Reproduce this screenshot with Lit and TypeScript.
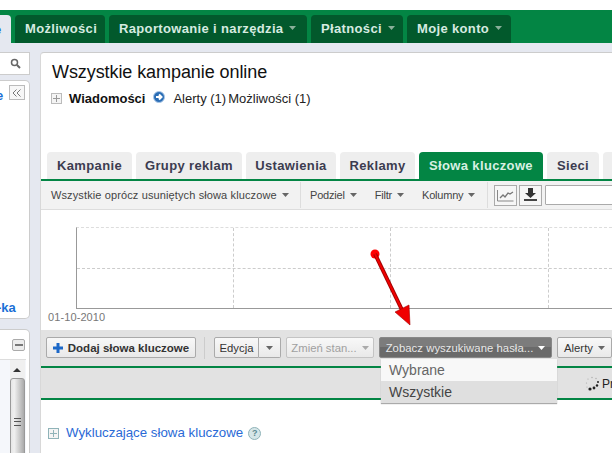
import { LitElement, html, css } from "lit";
import { customElement } from "lit/decorators.js";

const caret = (c = "#666") => html`<svg class="caret" width="7" height="4" viewBox="0 0 7 4"><path d="M0 0h7L3.500 4z" fill=${c}></path></svg>`;

@customElement("app-root")
export class AppRoot extends LitElement {
  static styles = css`
    :host { display: block; width: 612px; height: 453px; overflow: hidden; position: relative; background: #fff; font-family: "Liberation Sans", Arial, sans-serif; }
    .caret { flex: none; }
    .top { height: 10px; background: #fff; }
    .nav { height: 33px; background: #038544; display: flex; align-items: flex-end; gap: 4px; box-sizing: border-box; }
    .tab0 { width: 11px; height: 28px; background: #e5e8f0; border-top-right-radius: 4px; flex: none; overflow: hidden; color: #1a6fd6; font-weight: bold; font-size: 13px; line-height: 30px; text-indent: -6px; }
    .ntab { height: 28px; background: #02592c; border-radius: 4px 4px 0 0; color: #d6ebe0; font-weight: bold; font-size: 13px; letter-spacing: .35px; display: flex; align-items: center; gap: 6px; padding: 0 10px 2px; box-sizing: border-box; flex: none; white-space: nowrap; }
    .nav .t1 { width: 90px; }
    .nav .t2 { width: 198px; }
    .nav .t3 { width: 92px; }
    .nav .t4 { width: 104px; }
    .body { height: 410px; background: #e5e8f0; display: flex; padding-top: 9px; box-sizing: border-box; position: relative; gap: 11px; }
    .side { width: 30px; flex: none; display: flex; flex-direction: column; }
    .sbox { background: #fff; border: 1px solid #ccc; border-left: 0; box-sizing: border-box; flex: none; }
    .search { height: 23px; display: flex; justify-content: flex-end; align-items: center; padding-right: 8px; }
    .tree { height: 239px; margin-top: 5px; border-radius: 0 5px 5px 0; position: relative; color: #1a6fd6; font-weight: bold; font-size: 13px; }
    .tree .e { position: absolute; left: -4px; top: 8px; line-height: 14px; }
    .tree .ka { position: absolute; left: -3px; bottom: 3px; line-height: 14px; }
    .mini { position: absolute; left: 9px; top: 4px; width: 16px; height: 15px; border: 1px solid #bbb; box-sizing: border-box; display: flex; align-items: center; justify-content: center; background: #f7f7f7; }
    .tree2 { height: 130px; margin-top: 10px; border-radius: 0 5px 0 0; position: relative; }
    .minus { position: absolute; left: 12px; top: 9px; width: 13px; height: 12px; border: 1px solid #aaa; border-radius: 2px; background: #ececec; box-sizing: border-box; display: flex; align-items: center; justify-content: center; }
    .minus i { width: 8px; height: 2px; background: #777; }
    .list { position: absolute; left: 0; right: 3px; top: 29px; bottom: 0; background: #f5f7fb; border-top: 1px solid #ddd; }
    .sb { position: absolute; left: 10px; width: 15px; top: 0; bottom: 0; background: #f0f0f0; }
    .sb .up { position: absolute; left: 3px; top: 8px; }
    .thumb { position: absolute; left: 0; right: 0; top: 18px; bottom: -20px; background: linear-gradient(90deg, #e6e6e6, #f0f0f0 25%, #aaa); border: 1px solid #999; border-radius: 3px; box-sizing: border-box; }
    .grip { position: absolute; left: 3px; top: 39px; width: 7px; height: 8px; border-top: 1px solid #555; border-bottom: 1px solid #555; box-sizing: border-box; }
    .grip::after { content: ""; position: absolute; left: 0; right: 0; top: 2px; border-top: 1px solid #555; }
    .main { flex: 1; background: #fff; border-radius: 4px 0 0 0; border-top: 1px solid #ccc; border-left: 1px solid #d8d8d8; margin-left: -1px; position: relative; overflow: hidden; }
    .head { padding: 9px 0 0 11px; height: 99px; box-sizing: border-box; }
    h1 { margin: 0; font-size: 18px; font-weight: normal; color: #111; line-height: 20px; letter-spacing: -.08px; }
    .msgs { display: flex; align-items: center; font-size: 13px; margin: 8px 0 0 -1px; height: 16px; color: #222; white-space: nowrap; }
    .plus { width: 11px; height: 11px; border: 1px solid #bbb; background: #f4f4f4; box-sizing: border-box; display: flex; align-items: center; justify-content: center; flex: none; }
    .msgs b { margin-left: 7px; color: #111; }
    .msgs svg.go { margin: 0 8px 2px 8px; flex: none; }
    .msgs .mo { margin-left: 2px; }
    .tabs { display: flex; gap: 4px; padding-left: 6px; height: 27px; align-items: flex-end; }
    .tb { height: 27px; background: #eee; border-radius: 4px 4px 0 0; font-weight: bold; font-size: 13px; color: #3c3c50; display: flex; align-items: center; justify-content: center; box-sizing: border-box; flex: none; letter-spacing: .35px; white-space: nowrap; }
    .tb.on { background: #038544; color: #d9f0e2; }
    .bar { height: 28px; background: #f2f2f2; border-top: 2px solid #038544; border-bottom: 1px solid #ddd; display: flex; align-items: center; font-size: 11px; color: #444; padding-left: 10px; }
    .bar span { display: inline-flex; align-items: center; gap: 5px; white-space: nowrap; flex: none; }
    .bar .all { width: 238px; letter-spacing: .12px; }
    .bar .opt { letter-spacing: -.2px; }
    .sep { width: 1px; height: 26px; background: #ddd; flex: none; }
    .ml-11 { margin-left: 11px; }
    .ml-9 { margin-left: 9px; }
    .ml-18 { margin-left: 18px; }
    .sep2 { margin: 0 6px 0 12px; }
    .ib { width: 23px; height: 21px; border: 1px solid #aaa; background: #f6f6f6; box-sizing: border-box; display: flex; align-items: center; justify-content: center; flex: none; }
    .ib2 { margin-left: 2px; }
    .inp { width: 100px; height: 20px; background: #fff; border: 1px solid #aaa; box-sizing: border-box; flex: none; border-radius: 1px; margin-left: 3px; }
    .chart { height: 120px; position: relative; }
    .plot { position: absolute; left: 35px; top: 17px; right: 0; height: 82px; box-sizing: border-box; border-left: 1px solid #999; border-bottom: 1px solid #999; border-top: 1px dashed #ddd; }
    .v { position: absolute; top: 0; bottom: 0; border-left: 1px dashed #ccc; }
    .h { position: absolute; left: 0; right: 0; top: 40px; border-top: 1px dashed #ccc; }
    .date { position: absolute; left: 7px; top: 101px; font-size: 11px; color: #777; letter-spacing: .1px; }
    .tools { background: #e2e2e2; display: flex; align-items: flex-start; padding: 7px 0 0 5px; box-sizing: content-box; height: 29px; border-bottom: 2px solid #038544; }
    .btn { height: 21px; border: 1px solid #aaa; border-radius: 2px; background: linear-gradient(#f8f8f8, #e9e9e9); box-sizing: border-box; display: inline-flex; align-items: center; justify-content: center; font-size: 11.3px; color: #333; gap: 5px; flex: none; white-space: nowrap; }
    .btn.add { font-weight: bold; font-size: 11.5px; width: 150px; }
    .tools .sep { height: 22px; background: #ccc; margin: 0 9px 0 8px; }
    .btn.ed { width: 45px; border-radius: 2px 0 0 2px; }
    .btn.edc { width: 22px; border-left: 0; border-radius: 0 2px 2px 0; }
    .btn.dis { width: 88px; margin-left: 5px; color: #a0a0a0; border-color: #c4c4c4; }
    .btn.sel { width: 173px; margin-left: 5px; background: linear-gradient(#7c7c7c 0 45%, #6a6a6a 45%); border-color: #888; color: #e8e8e8; letter-spacing: .05px; }
    .btn.al { width: 55px; margin-left: 5px; }
    .gray { height: 30px; background: #e2e2e2; border-bottom: 2px solid #038544; position: relative; }
    .pr { position: absolute; left: 544px; top: 8px; display: flex; align-items: center; gap: 2px; font-size: 12px; color: #222; }
    .neg { display: flex; align-items: center; margin: 26px 0 0 7px; font-size: 13.3px; line-height: 14px; color: #2a6ad6; white-space: nowrap; }
    .plus.np { margin-right: 7px; border-color: #8fb3b8; }
    .q { width: 13px; height: 13px; border-radius: 50%; background: #d6e6e8; border: 1px solid #8fb3b8; box-sizing: border-box; font-size: 9px; font-weight: bold; color: #5c8a90; display: flex; align-items: center; justify-content: center; margin-left: 5px; flex: none; }
    .menu { position: absolute; left: 381px; top: 359px; width: 176px; background: #f8f8f8; box-shadow: 0 1px 1px #aaa; font-size: 14px; color: #666; }
    .menu div { height: 22px; line-height: 22px; padding-left: 8px; }
    .menu .hi { background: #dfdfdf; color: #444; }
    .arrow { position: absolute; left: 0; top: 0; pointer-events: none; }
  `;

  render() {
    return html`
      <div class="top"></div>
      <div class="nav">
        <div class="tab0">e</div>
        <div class="ntab t1">Możliwości</div>
        <div class="ntab t2">Raportowanie i narzędzia ${caret("#8ab09a")}</div>
        <div class="ntab t3">Płatności ${caret("#8ab09a")}</div>
        <div class="ntab t4">Moje konto ${caret("#8ab09a")}</div>
      </div>
      <div class="body">
        <div class="side">
          <div class="sbox search">
            <svg width="11" height="11" viewBox="0 0 11 11"><circle cx="4.500" cy="4.500" r="3" fill="none" stroke="#666" stroke-width="1.5"></circle><path d="M7 7l3 3" stroke="#666" stroke-width="2"></path></svg>
          </div>
          <div class="sbox tree">
            <span class="e">e</span>
            <div class="mini"><svg width="10" height="8" viewBox="0 0 10 8"><path d="M4.500 0.500L1 4l3.500 3.500M8.500 0.500L5 4l3.500 3.500" fill="none" stroke="#777"></path></svg></div>
            <span class="ka">-ka</span>
          </div>
          <div class="sbox tree2">
            <div class="minus"><i></i></div>
            <div class="list">
              <div class="sb">
                <svg class="up" width="8" height="4" viewBox="0 0 8 4"><path d="M4 0l4 4H0z" fill="#333"></path></svg>
                <div class="thumb"><div class="grip"></div></div>
              </div>
            </div>
          </div>
        </div>
        <div class="main">
          <div class="head">
            <h1>Wszystkie kampanie online</h1>
            <div class="msgs">
              <div class="plus"><svg width="7" height="7" viewBox="0 0 7 7"><path d="M0 3.500h7M3.500 0v7" stroke="#999"></path></svg></div>
              <b>Wiadomości</b>
              <svg class="go" width="12" height="12" viewBox="0 0 12 12"><circle cx="6" cy="6" r="5.500" fill="#2a6db5" stroke="#a9c6e6"></circle><path d="M3 6h5M6 3.500L8.500 6 6 8.500" stroke="#fff" stroke-width="2" fill="none"></path></svg>
              <span>Alerty (1)</span><span class="mo">Możliwości (1)</span>
            </div>
          </div>
          <div class="tabs">
            <div class="tb" style="width:85px">Kampanie</div>
            <div class="tb" style="width:106px">Grupy reklam</div>
            <div class="tb" style="width:90px">Ustawienia</div>
            <div class="tb" style="width:75px">Reklamy</div>
            <div class="tb on" style="width:124px">Słowa kluczowe</div>
            <div class="tb" style="width:52px">Sieci</div>
            <div class="tb" style="width:30px"></div>
          </div>
          <div class="bar">
            <span class="all">Wszystkie oprócz usuniętych słowa kluczowe ${caret()}</span>
            <div class="sep ml-11"></div>
            <span class="opt ml-9">Podziel ${caret()}</span>
            <span class="opt ml-18">Filtr ${caret()}</span>
            <span class="opt ml-18">Kolumny ${caret()}</span>
            <div class="sep sep2"></div>
            <div class="ib"><svg width="17" height="13" viewBox="0 0 17 13"><path d="M.5 1v11h16" fill="none" stroke="#888"></path><path d="M3 9l3-3 2 2 3-4 2 1 3-2" fill="none" stroke="#777" stroke-width="1.300"></path></svg></div>
            <div class="ib ib2"><svg width="15" height="14" viewBox="0 0 15 14"><path d="M5 0h5v5h3L7.500 10 2 5h3z" fill="#333"></path><path d="M1 11h13v2H1z" fill="#444"></path></svg></div>
            <div class="inp"></div>
          </div>
          <div class="chart">
            <div class="plot">
              <div class="v" style="left:156px"></div>
              <div class="v" style="left:313px"></div>
              <div class="v" style="left:471px"></div>
              <div class="h"></div>
            </div>
            <div class="date">01-10-2010</div>
          </div>
          <div class="tools">
            <div class="btn add"><svg width="10" height="10" viewBox="0 0 10 10"><path d="M3.500 0h3v3.500H10v3H6.500V10h-3V6.500H0v-3h3.500z" fill="#1c68c8"></path></svg>Dodaj słowa kluczowe</div>
            <div class="sep"></div>
            <div class="btn ed">Edycja</div>
            <div class="btn edc">${caret()}</div>
            <div class="btn dis">Zmień stan... ${caret("#aaa")}</div>
            <div class="btn sel">Zobacz wyszukiwane hasła... ${caret("#fff")}</div>
            <div class="btn al">Alerty ${caret()}</div>
          </div>
          <div class="gray">
            <div class="pr">
              <svg width="15" height="15" viewBox="0 0 15 15"><g fill="#222"><circle cx="5" cy="13" r="1.600"></circle><circle cx="9" cy="12" r="1.400"></circle><circle cx="12" cy="9.500" r="1.200"></circle><circle cx="13" cy="6" r="1"></circle></g><g fill="#aaa"><circle cx="11" cy="2.500" r=".7"></circle><circle cx="7" cy="1.500" r=".7"></circle><circle cx="3" cy="3" r=".6"></circle><circle cx="1.500" cy="7" r=".6"></circle><circle cx="2" cy="11" r=".6"></circle></g></svg>
              <span>Pr</span>
            </div>
          </div>
          <div class="neg">
            <div class="plus np"><svg width="7" height="7" viewBox="0 0 7 7"><path d="M0 3.500h7M3.500 0v7" stroke="#8fb3b8"></path></svg></div>
            Wykluczające słowa kluczowe <span class="q">?</span>
          </div>
        </div>
      </div>
      <div class="menu">
        <div>Wybrane</div>
        <div class="hi">Wszystkie</div>
      </div>
      <svg class="arrow" width="612" height="453" viewBox="0 0 612 453">
        <circle cx="375" cy="254" r="4.500" fill="#f00"></circle>
        <path d="M375 254L403 312" stroke="#a00000" stroke-width="4"></path>
        <path d="M375 254L403 312" stroke="#f00000" stroke-width="2"></path>
        <path d="M395 312L409 305L410 325z" fill="#f00000" stroke="#a00000" stroke-width=".6"></path>
      </svg>
    `;
  }
}
